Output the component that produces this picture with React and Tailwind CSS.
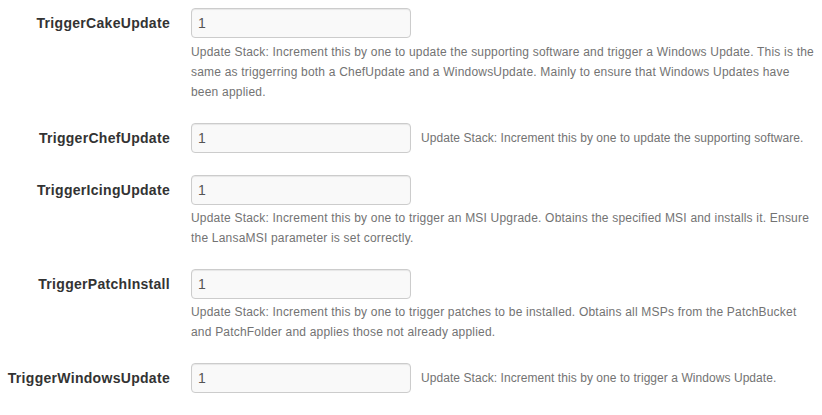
const params = [
  {
    name: 'TriggerCakeUpdate',
    value: '1',
    help: 'Update Stack: Increment this by one to update the supporting software and trigger a Windows Update. This is the same as triggerring both a ChefUpdate and a WindowsUpdate. Mainly to ensure that Windows Updates have been applied.',
    first: true,
  },
  {
    name: 'TriggerChefUpdate',
    value: '1',
    help: 'Update Stack: Increment this by one to update the supporting software.',
    inline: true,
  },
  {
    name: 'TriggerIcingUpdate',
    value: '1',
    help: 'Update Stack: Increment this by one to trigger an MSI Upgrade. Obtains the specified MSI and installs it. Ensure the LansaMSI parameter is set correctly.',
  },
  {
    name: 'TriggerPatchInstall',
    value: '1',
    help: 'Update Stack: Increment this by one to trigger patches to be installed. Obtains all MSPs from the PatchBucket and PatchFolder and applies those not already applied.',
  },
  {
    name: 'TriggerWindowsUpdate',
    value: '1',
    help: 'Update Stack: Increment this by one to trigger a Windows Update.',
    inline: true,
  },
]

function ParamRow({ name, value, help, inline, first }) {
  return (
    <div className={inline ? 'flex mb-[22px]' : 'flex mb-[21px]'}>
      {/* label column */}
      <div className="w-[191px] shrink-0 pr-[21px] h-[30px] flex items-center justify-end">
        <label className="text-[14px] font-bold tracking-[0.3px] text-[#333]">{name}</label>
      </div>

      {/* field column */}
      <div className={inline ? 'flex items-center' : 'w-[626px] flex flex-col'}>
        <input
          type="text"
          defaultValue={value}
          className="w-[220px] h-[30px] px-[6px] text-[14px] text-[#555] bg-[#f9f9f9] border border-[#ccc] rounded-[4px] shadow-[inset_0_1px_1px_rgba(0,0,0,0.075)] outline-none"
        />
        {inline ? (
          <span className="ml-[10px] text-[12px] leading-[20px] tracking-[0.06px] text-[#737373]">{help}</span>
        ) : (
          <p className={(first ? 'mt-[4px] ' : 'mt-[3px] ') + 'text-[12px] leading-[20px] tracking-[0.2px] text-[#737373]'}>{help}</p>
        )}
      </div>
    </div>
  )
}

export default function App() {
  return (
    <div className="w-[822px] h-[415px] overflow-hidden bg-white pt-[8px] font-['Liberation_Sans',Arial,sans-serif]">
      {params.map((p) => (
        <ParamRow key={p.name} {...p} />
      ))}
    </div>
  )
}
